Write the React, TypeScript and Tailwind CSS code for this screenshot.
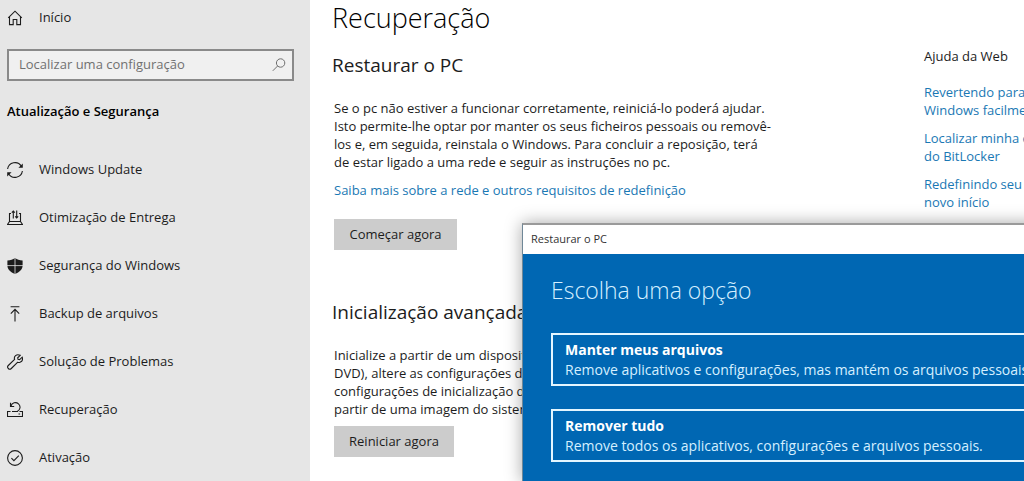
import React from "react";

type IconProps = {
  children: React.ReactNode;
};

type NavItem = {
  label: string;
  icon: React.ReactNode;
};

type OptionProps = {
  title: string;
  description: string;
};

// shared outline style for the sidebar icons
const Icon: React.FC<IconProps> = ({ children }) => (
  <svg
    viewBox="0 0 16 16"
    className="h-4 w-4 shrink-0"
    fill="none"
    stroke="currentColor"
    strokeWidth="1.1"
    aria-hidden="true"
  >
    {children}
  </svg>
);

const HomeIcon = () => (
  <Icon>
    <path d="M1.2 7.8 8 1.2l6.8 6.6M2.5 6.600v8h3.700V9.500h3.600v5.100h3.700v-8" />
  </Icon>
);

const navItems: NavItem[] = [
  {
    label: "Windows Update",
    icon: (
      <Icon>
        <path d="M.6 7A7.500 7.500 0 0 1 14.400 4.200M15.400 9A7.500 7.500 0 0 1 1.600 11.800" />
        <path
          d="M15.800 1.400v4.400h-4.400zM.2 14.600v-4.400h4.400z"
          fill="currentColor"
          stroke="none"
        />
      </Icon>
    ),
  },
  {
    label: "Otimização de Entrega",
    icon: (
      <Icon>
        <path d="M4 3.500H2.500v8M12 3.500h1.500v8M2.500 11.500h11l2 3H.5z" />
        <path d="M6.300 8.500V1M4.800 2.600 6.300 1l1.500 1.600M9.700.5V8M8.200 6.400 9.700 8l1.500-1.600" />
      </Icon>
    ),
  },
  {
    label: "Segurança do Windows",
    icon: (
      <Icon>
        <path
          d="M8 0c2 1.600 4.500 2.300 7.600 2.400v5c0 4-3.100 6.700-7.600 8.600C3.500 14.100.4 11.400.4 7.400v-5C3.500 2.300 6 1.600 8 0z"
          fill="currentColor"
          stroke="none"
        />
        <path d="M8 0v16M0 7.600h16" stroke="#e6e6e6" strokeWidth="0.8" />
      </Icon>
    ),
  },
  {
    label: "Backup de arquivos",
    icon: (
      <Icon>
        <path d="M3.600.8h8.800M8 15.600V3.600M3.800 7.600 8 3.400l4.200 4.200" />
      </Icon>
    ),
  },
  {
    label: "Solução de Problemas",
    icon: (
      <Icon>
        <path d="M13.200 1.300 10.700 3.800l.3 1.500 1.600.4 2.600-2.500c.7 2.100-.2 4.300-2.200 5.100-.9.300-1.700.3-2.500 0l-6.200 6.200a2.100 2.100 0 0 1-3-3l6.300-6.200C6.500 2.500 9.400-.4 13.200 1.300z" />
      </Icon>
    ),
  },
  {
    label: "Recuperação",
    icon: (
      <Icon>
        <path d="M3.500 9.500h-3v5h15v-5h-3" />
        <path d="M5 9.500h6M10.200 9.500A4.600 4.600 0 1 0 4 4M3.500.8v3.700h3.700M11.500 12h1.600" />
      </Icon>
    ),
  },
  {
    label: "Ativação",
    icon: (
      <Icon>
        <circle cx="8" cy="8" r="7.400" />
        <path d="m4.400 8.200 2.500 2.500 4.900-5" />
      </Icon>
    ),
  },
];

const Sidebar = () => (
  <aside className="w-[310px] shrink-0 bg-[#e6e6e6] pl-[7px] text-[#1c1c1c]">
    <a href="#inicio" className="flex h-9 items-center gap-4 text-[13px]">
      <HomeIcon />
      Início
    </a>

    {/* search box */}
    <div className="mt-[13px] mr-4 flex h-8 items-center border-2 border-[#8a8a8a] bg-[#f0f0f0] px-2.5">
      <input
        type="text"
        aria-label="Localizar uma configuração"
        placeholder="Localizar uma configuração"
        className="min-w-0 flex-1 bg-transparent text-[13px] outline-none placeholder:text-[#707070]"
      />
      <svg
        viewBox="0 0 14 14"
        className="-mr-1 h-3.5 w-3.5 text-[#6f6f6f]"
        fill="none"
        stroke="currentColor"
        aria-hidden="true"
      >
        <circle cx="8.600" cy="5" r="4.200" />
        <path d="M5.600 8 .8 12.800" />
      </svg>
    </div>

    <h2 className="mt-5 text-[13px] leading-5 font-semibold text-black">
      Atualização e Segurança
    </h2>

    <nav className="mt-[25px]">
      {navItems.map((item) => (
        <a
          key={item.label}
          href="#"
          className="flex h-12 items-center gap-4 text-[13px]"
        >
          {item.icon}
          {item.label}
        </a>
      ))}
    </nav>
  </aside>
);

const Content = () => (
  <main className="w-[592px] shrink-0 pl-[22px] whitespace-nowrap text-[#1c1c1c]">
    <h1 className="text-[27px] leading-9 font-light text-black">Recuperação</h1>

    <section className="mt-[15px]">
      <h2 className="text-[19px] leading-7">Restaurar o PC</h2>
      <p className="mt-5 pl-0.5 text-[13px] leading-[18px]">
        Se o pc não estiver a funcionar corretamente, reiniciá-lo poderá ajudar.
        <br />
        Isto permite-lhe optar por manter os seus ficheiros pessoais ou removê-
        <br />
        los e, em seguida, reinstala o Windows. Para concluir a reposição, terá
        <br />
        de estar ligado a uma rede e seguir as instruções no pc.
      </p>
      <a
        href="#"
        className="mt-[9px] block pl-0.5 text-[13px] leading-5 text-[#1a78b4]"
      >
        Saiba mais sobre a rede e outros requisitos de redefinição
      </a>
      <button
        type="button"
        className="mt-[19px] ml-0.5 h-[31px] w-[123px] bg-[#cccccc] text-[13px]"
      >
        Começar agora
      </button>
    </section>

    <section className="mt-12">
      <h2 className="text-[19px] leading-7">Inicialização avançada</h2>
      <p className="mt-5 pl-0.5 text-[13px] leading-[18px]">
        Inicialize a partir de um dispositivo ou disco (como unidade USB ou
        <br />
        DVD), altere as configurações de firmware do PC, altere as
        <br />
        configurações de inicialização do Windows ou restaure o Windows a
        <br />
        partir de uma imagem do sistema.
      </p>
      <button
        type="button"
        className="mt-2 ml-0.5 h-[31px] w-[120px] bg-[#cccccc] text-[13px]"
      >
        Reiniciar agora
      </button>
    </section>
  </main>
);

const WebHelp = () => (
  <aside className="ml-[22px] shrink-0 pt-[47px] text-[13px] leading-[18px] whitespace-nowrap">
    <h2 className="mb-[18px] text-[#1c1c1c]">Ajuda da Web</h2>
    <div className="flex flex-col gap-2.5 text-[#1a78b4]">
      <a href="#">
        Revertendo para o
        <br />
        Windows facilmente
      </a>
      <a href="#">
        Localizar minha chave
        <br />
        do BitLocker
      </a>
      <a href="#">
        Redefinindo seu PC para um
        <br />
        novo início
      </a>
    </div>
  </aside>
);

const Option: React.FC<OptionProps> = ({ title, description }) => (
  <button
    type="button"
    className="flex h-[53px] flex-col justify-center border-2 border-[#e4f6ff] pl-3 text-left text-sm leading-5 whitespace-nowrap text-[#d5efff]"
  >
    <span className="font-bold text-white">{title}</span>
    <span>{description}</span>
  </button>
);

const ResetDialog = () => (
  <div
    role="dialog"
    aria-labelledby="dialog-title"
    className="absolute top-[223px] -right-12 bottom-0 left-[522px] flex flex-col border-t-2 border-l border-t-[#9a9a9a] border-l-[#6f8797] bg-[#0067b3] shadow-[0_0_16px_rgba(0,0,0,0.35)]"
  >
    <div
      id="dialog-title"
      className="flex h-[29px] shrink-0 items-center bg-white pl-2 text-[11px] text-[#333333]"
    >
      Restaurar o PC
    </div>
    <div className="flex flex-col pl-7">
      <h2 className="mt-[18px] mb-[25px] text-[23px] leading-9 font-light text-[#d5efff]">
        Escolha uma opção
      </h2>
      <div className="flex flex-col gap-[23px]">
        <Option
          title="Manter meus arquivos"
          description="Remove aplicativos e configurações, mas mantém os arquivos pessoais."
        />
        <Option
          title="Remover tudo"
          description="Remove todos os aplicativos, configurações e arquivos pessoais."
        />
      </div>
    </div>
  </div>
);

export default function App() {
  return (
    <div className="relative flex min-h-screen overflow-hidden bg-white font-['Open_Sans','Noto_Sans',sans-serif]">
      <Sidebar />
      <Content />
      <WebHelp />
      <ResetDialog />
    </div>
  );
}
